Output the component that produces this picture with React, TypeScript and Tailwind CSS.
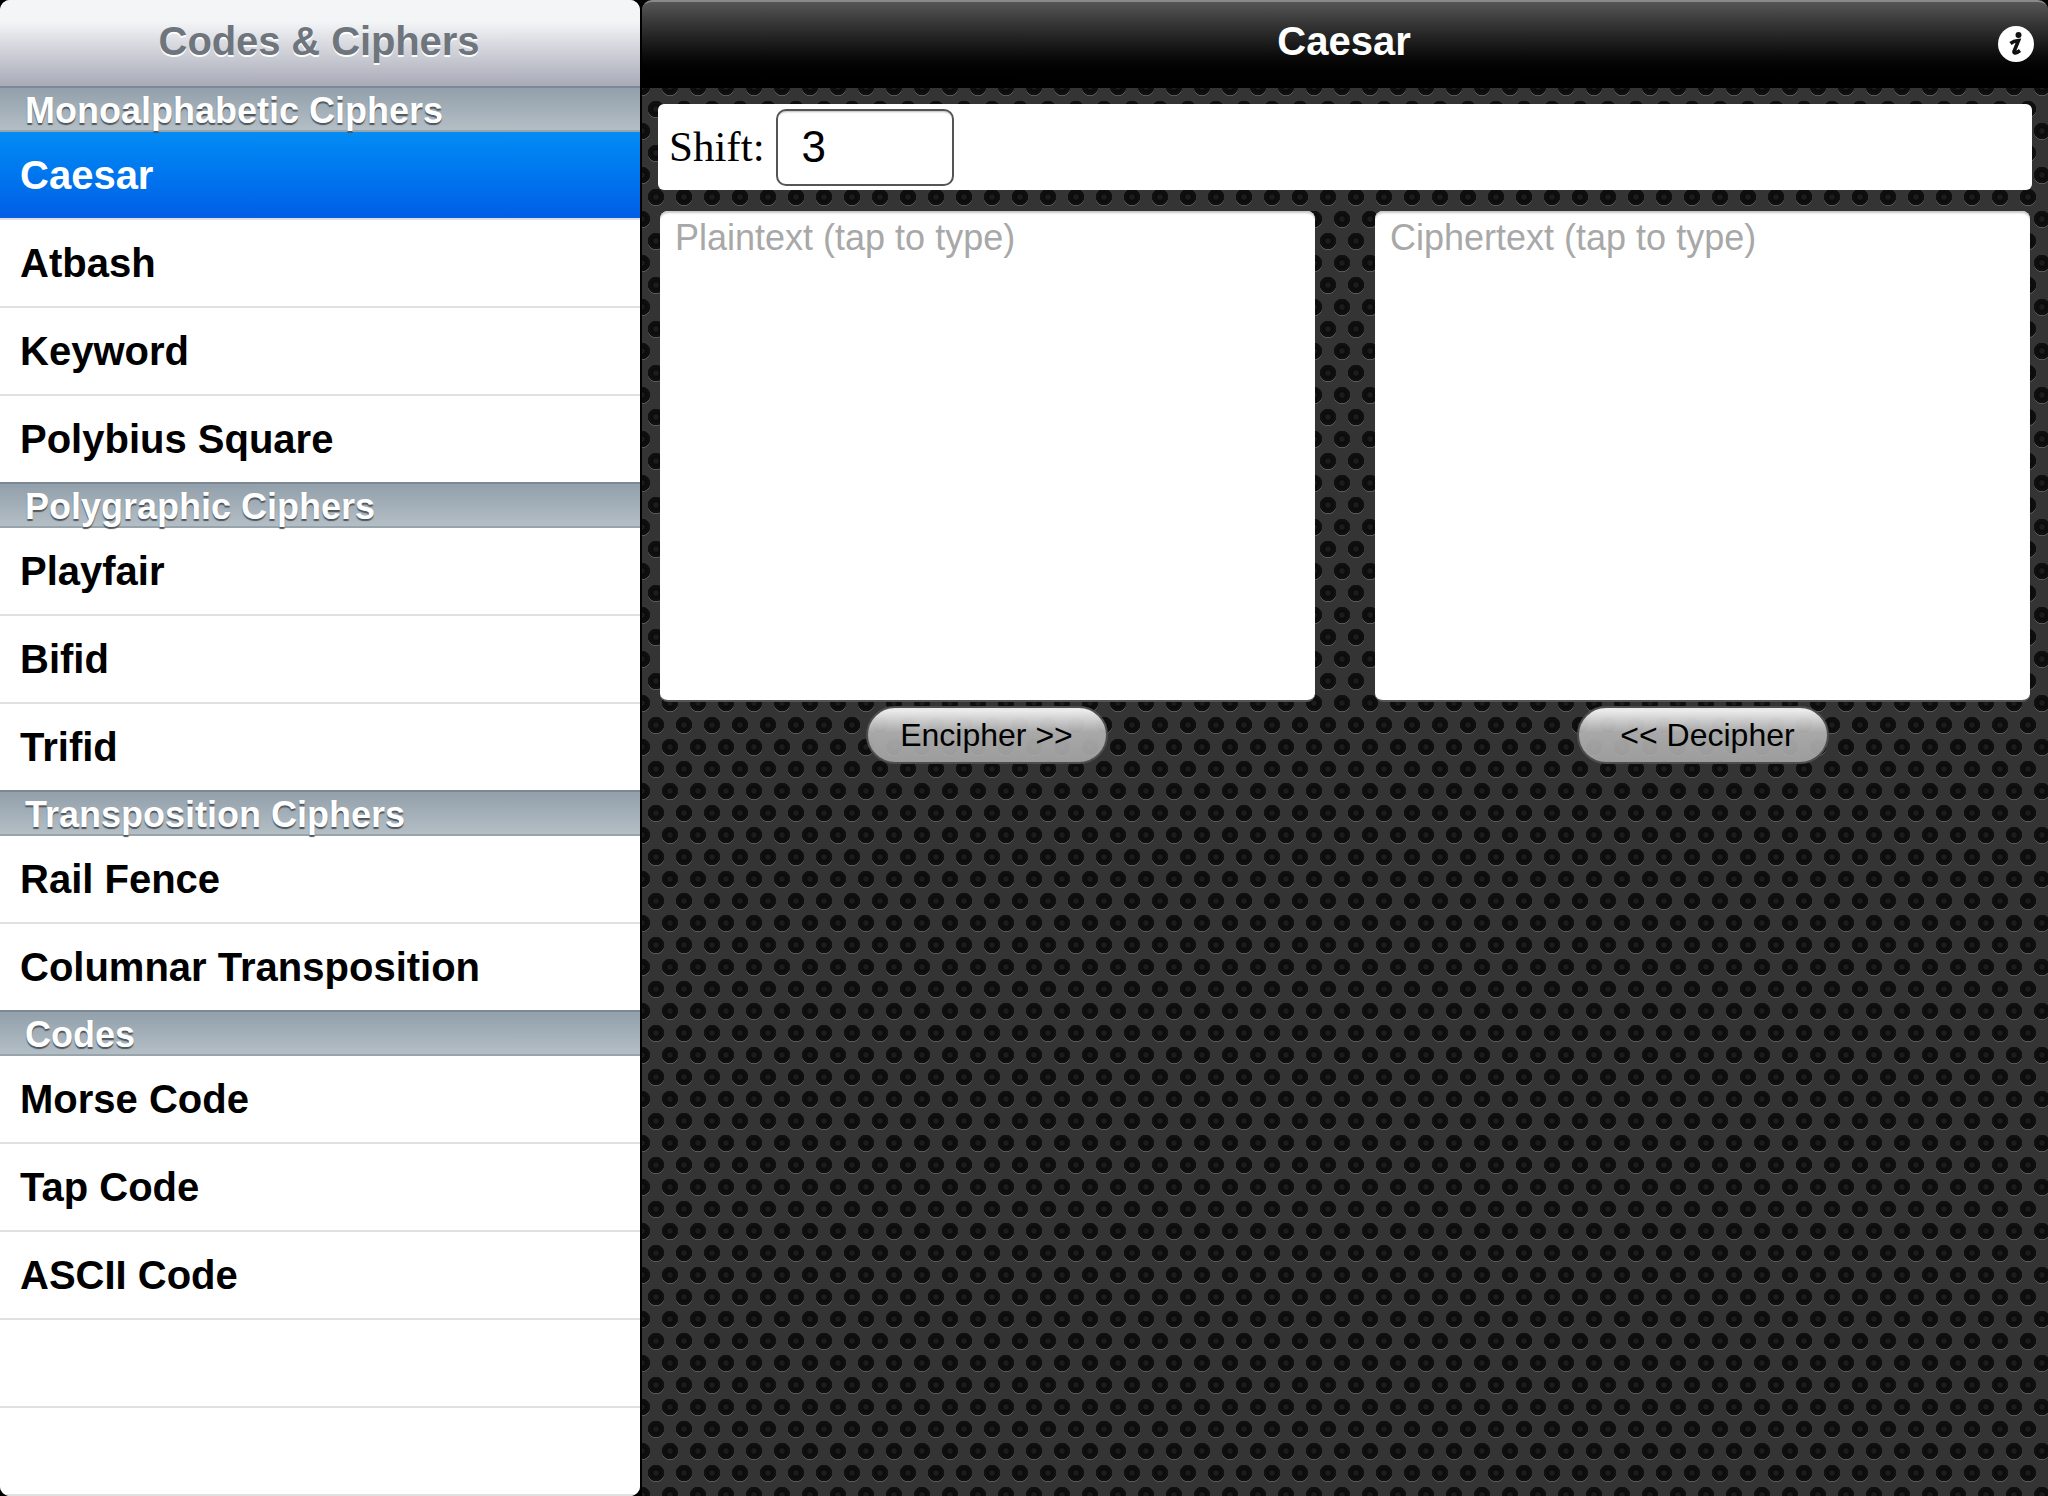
const sections = [
  { title: 'Monoalphabetic Ciphers', items: ['Caesar', 'Atbash', 'Keyword', 'Polybius Square'] },
  { title: 'Polygraphic Ciphers', items: ['Playfair', 'Bifid', 'Trifid'] },
  { title: 'Transposition Ciphers', items: ['Rail Fence', 'Columnar Transposition'] },
  { title: 'Codes', items: ['Morse Code', 'Tap Code', 'ASCII Code'] },
];

function SectionHeader({ title }: { title: string }) {
  return (
    <div className="relative -mt-[2px] flex h-[46px] shrink-0 items-center border-t-2 border-b-2 border-t-[#7c8994] border-b-[#98a4ac] bg-gradient-to-b from-[#92a0ab] to-[#b4bec5] pl-[25px] pt-[4px] text-[36px] font-bold leading-none text-white [text-shadow:0_2px_1px_#4f575e]">
      {title}
    </div>
  );
}

function Row({ label, selected }: { label?: string; selected?: boolean }) {
  return (
    <div className="h-[88px] shrink-0 border-b-2 border-[#e0e0e0] bg-white">
      <div
        className={`flex h-full items-center pl-[20px] text-[40px] font-bold ${selected ? 'bg-gradient-to-b from-[#058cf5] to-[#015ee6] text-white' : 'text-black'}`}
      >
        {label}
      </div>
    </div>
  );
}

function Sidebar() {
  return (
    <div className="flex h-[1496px] w-[640px] shrink-0 flex-col overflow-hidden rounded-[10px] bg-white">
      <div className="flex h-[88px] shrink-0 items-center justify-center border-b-2 border-[#78808d] bg-gradient-to-b from-[#f4f5f7] from-25% to-[#a8aab7] pb-[4px] pr-[2px] text-[40px] font-bold tracking-[-0.1px] text-[#6e757d] [text-shadow:0_2px_0_#fff]">
        Codes &amp; Ciphers
      </div>
      {sections.map((section) => (
        <div key={section.title} className="flex flex-col">
          <SectionHeader title={section.title} />
          {section.items.map((item) => (
            <Row key={item} label={item} selected={item === 'Caesar'} />
          ))}
        </div>
      ))}
      <Row />
      <Row />
    </div>
  );
}

function InfoIcon() {
  return (
    <svg width="36" height="36" viewBox="0 0 36 36" className="absolute right-[14px] top-[24px]">
      <circle cx="18" cy="18" r="18" fill="#fff" />
      <circle cx="20.5" cy="9" r="3" fill="#111" />
      <path
        d="M12.5 17.5C15 15.5 17.5 14.8 20.5 14.5L16 25.5C15.5 27.5 18 27.5 22 24.5"
        fill="none"
        stroke="#111"
        strokeWidth="3.6"
      />
    </svg>
  );
}

function GlossButton({ label, className }: { label: string; className: string }) {
  return (
    <button
      className={`mt-[4px] flex h-[58px] items-center justify-center rounded-full border-2 border-[#4e4e4e] bg-gradient-to-b from-[#f4f4f4]/95 from-5% via-[#b5b5b5]/90 via-45% to-[#a8a8a8]/90 text-[32px] text-black ${className}`}
    >
      {label}
    </button>
  );
}

function CipherBox({ placeholder, button, buttonClass }: { placeholder: string; button: string; buttonClass: string }) {
  return (
    <div className="flex w-[655px] flex-col items-center">
      <textarea
        readOnly
        placeholder={placeholder}
        className="h-[491px] w-full resize-none rounded-[8px] border-b-2 border-[#555] bg-white py-[5px] pl-[15px] pr-[16px] text-[36px] leading-[44px] shadow-[inset_0_3px_2px_-1px_#c8c8c8] outline-none placeholder:text-[#a8a8a8]"
      />
      <GlossButton label={button} className={buttonClass} />
    </div>
  );
}

export default function App() {
  return (
    <div className="flex h-[1496px] w-[2048px] gap-[2px] overflow-hidden bg-black font-['Liberation_Sans',Arial,sans-serif]">
      <Sidebar />
      <div className="flex min-w-0 flex-1 flex-col">
        {/* Nav bar */}
        <div className="relative flex h-[88px] shrink-0 items-center justify-center rounded-t-[10px] border-t-2 border-[#8a8a8a] bg-gradient-to-b from-[#565656] to-black to-95% pb-[8px] pr-[2px] text-[40px] font-bold text-white">
          Caesar
          <InfoIcon />
        </div>

        {/* Perforated metal: two staggered holes per tile, each with a lit lower rim */}
        <div className="flex-1 bg-[#343434] bg-[radial-gradient(circle_at_14px_22px,#1c1c1c_0,#1c1c1c_2px,#0b0b0b_3.5px,#111_8px,transparent_8.5px),radial-gradient(circle_at_14px_22px,#1c1c1c_0,#1c1c1c_2px,#0b0b0b_3.5px,#111_8px,transparent_8.5px),radial-gradient(circle_at_14px_23px,#585858_8px,transparent_8.5px),radial-gradient(circle_at_14px_23px,#585858_8px,transparent_8.5px)] bg-[length:28px_44px] bg-[position:0_-89px,-14px_-67px,0_-89px,-14px_-67px] px-[16px] pt-[16px]">
          <div className="flex h-[86px] items-center rounded-[6px] bg-white pl-[11px]">
            <span className="font-['Liberation_Serif',serif] text-[43px] text-black">Shift:</span>
            <input
              readOnly
              value="3"
              className="ml-[11px] h-[77px] w-[178px] rounded-[10px] border-2 border-[#555] bg-white pl-[24px] text-[44px] text-black shadow-[inset_0_3px_2px_-2px_#bbb] outline-none"
            />
          </div>

          <div className="mt-[21px] flex justify-between px-[2px]">
            <CipherBox placeholder="Plaintext (tap to type)" button="Encipher >>" buttonClass="mr-[2px] w-[242px]" />
            <CipherBox placeholder="Ciphertext (tap to type)" button="<< Decipher" buttonClass="w-[252px] pl-[10px]" />
          </div>
        </div>
      </div>
    </div>
  );
}
